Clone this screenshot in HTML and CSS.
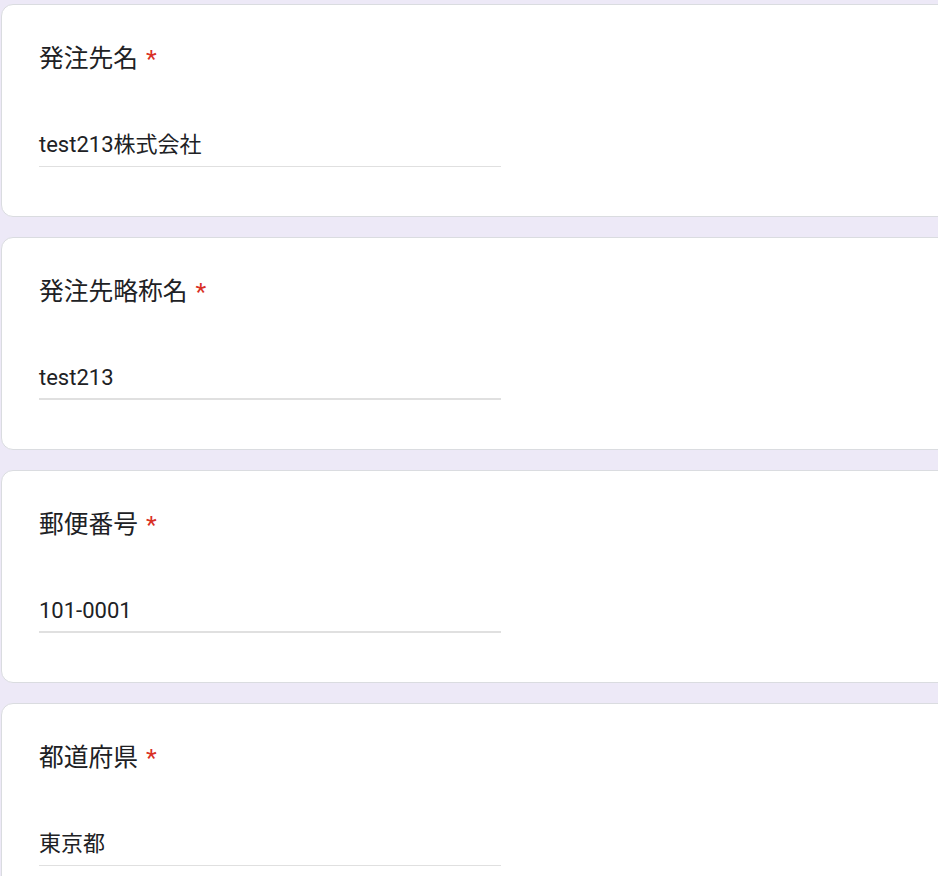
FILE: index.html
```html
<!DOCTYPE html>
<html lang="ja">
<head>
<meta charset="utf-8">
<title>発注先情報</title>
<link rel="stylesheet" href="styles.css">
</head>
<body>
<main class="form">
  <section class="card">
    <div class="title">発注先名<span class="req">*</span></div>
    <div class="field">test213株式会社</div>
  </section>
  <section class="card">
    <div class="title">発注先略称名<span class="req">*</span></div>
    <div class="field thick">test213</div>
  </section>
  <section class="card">
    <div class="title">郵便番号<span class="req">*</span></div>
    <div class="field thick">101-0001</div>
  </section>
  <section class="card">
    <div class="title">都道府県<span class="req">*</span></div>
    <div class="field">東京都</div>
  </section>
</main>
</body>
</html>
```

FILE: styles.css
```css
html, body {
  margin: 0;
  padding: 0;
  background: #ede9f7;
  overflow: hidden;
}
body {
  font-family: Roboto, "Noto Sans CJK JP", sans-serif;
  color: #202124;
}
.form {
  display: flex;
  flex-direction: column;
  gap: 20px;
  padding: 4px 0 0 1px;
  width: 1000px;
}
.card {
  background: #fff;
  border: 1px solid #dadce0;
  border-radius: 12px;
  padding: 36px 37px 49px;
  height: 213px;
  box-sizing: border-box;
}
.title {
  font-size: 24.75px;
  line-height: 36px;
  letter-spacing: 0;
}
.req {
  color: #d93025;
  padding-left: 8px;
}
.field {
  margin-top: 53px;
  width: 462px;
  font-size: 22px;
  line-height: 30px;
  padding-bottom: 6px;
  border-bottom: 1px solid #e0e0e0;
}
.field.thick {
  border-bottom-width: 2px;
  padding-bottom: 5px;
}
```
